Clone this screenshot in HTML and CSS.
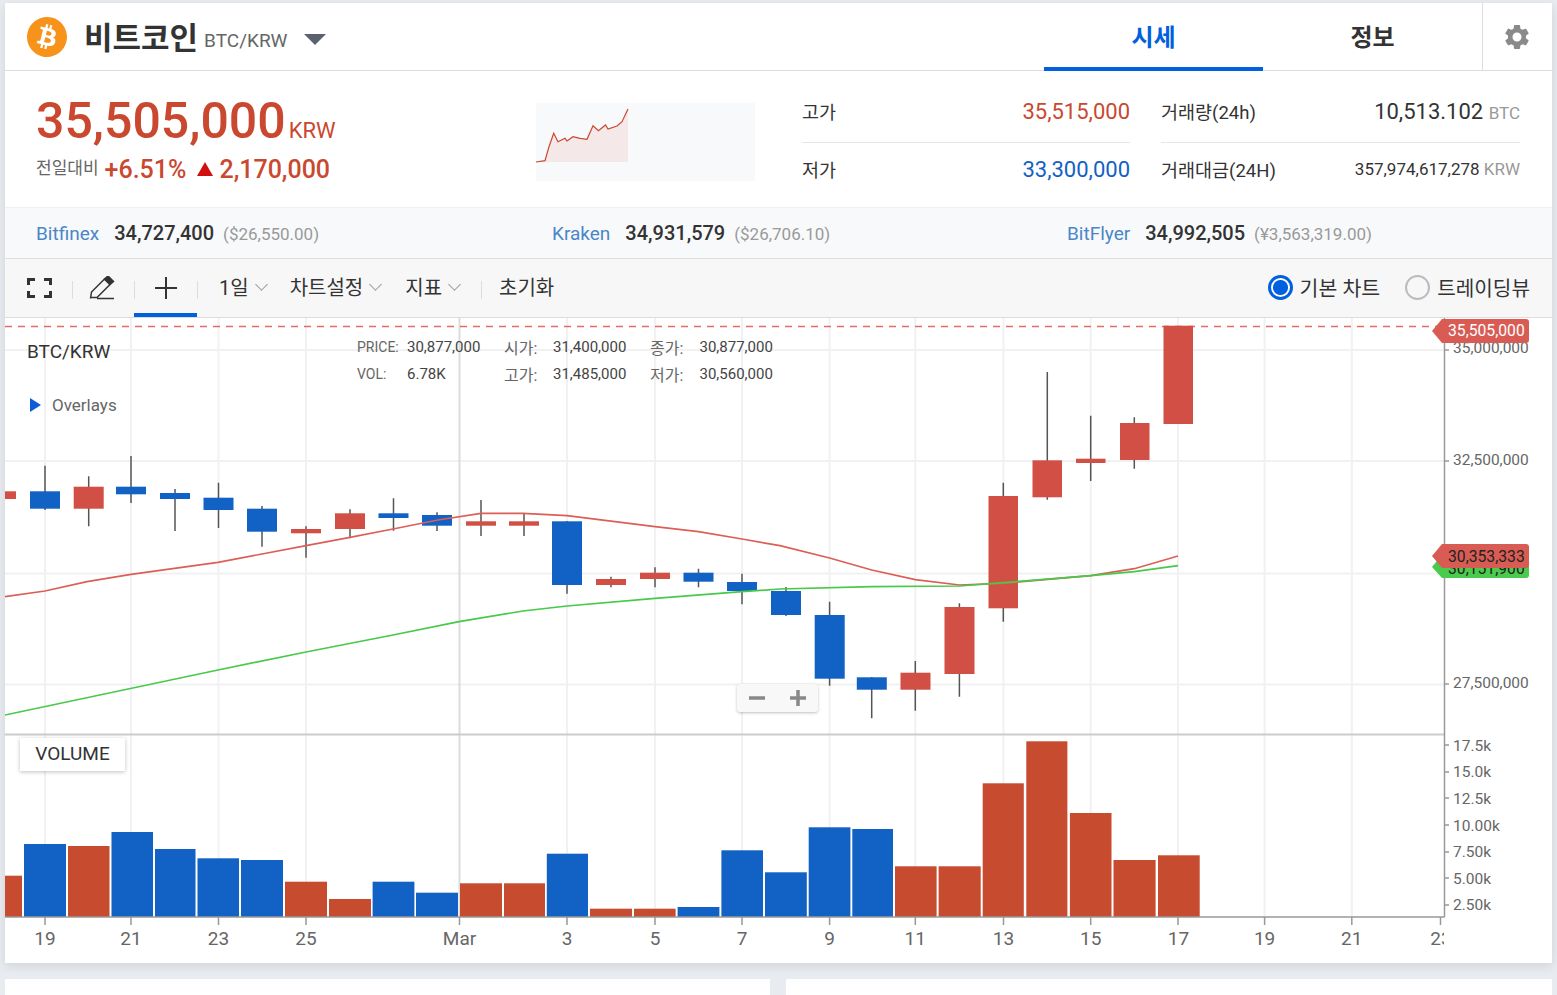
FILE: index.html
```html
<!DOCTYPE html>
<html lang="ko">
<head>
    <meta charset="UTF-8">
    <title>비트코인 BTC/KRW</title>
    <link rel="stylesheet" href="styles.css">
</head>
<body>
<div class="card">
    <header class="top-bar">
        <svg class="coin" viewBox="0 0 24 24"><path d="M23.638 14.904c-1.602 6.43-8.113 10.34-14.542 8.736C2.67 22.05-1.244 15.525.362 9.105 1.962 2.67 8.475-1.243 14.9.358c6.43 1.605 10.342 8.115 8.738 14.548v-.002zm-6.35-4.613c.24-1.59-.974-2.45-2.64-3.03l.54-2.153-1.315-.33-.525 2.107c-.345-.087-.705-.167-1.064-.25l.526-2.127-1.32-.33-.54 2.165c-.285-.067-.565-.132-.84-.2l-1.815-.45-.35 1.407s.975.225.955.236c.535.136.63.486.615.766l-1.477 5.92c-.075.166-.24.406-.614.314.015.02-.96-.24-.96-.24l-.66 1.51 1.71.426.93.242-.54 2.19 1.32.327.54-2.17c.36.1.705.19 1.05.273l-.51 2.154 1.32.33.545-2.19c2.24.427 3.93.257 4.64-1.774.57-1.637-.03-2.58-1.217-3.196.854-.193 1.5-.76 1.68-1.93h.01zm-3.01 4.22c-.404 1.64-3.157.75-4.05.53l.72-2.9c.896.23 3.757.67 3.33 2.37zm.41-4.24c-.37 1.49-2.662.735-3.405.55l.654-2.64c.744.18 3.137.524 2.75 2.084v.006z"/></svg>
        <h1 class="coin-name">비트코인</h1>
        <span class="coin-pair">BTC/KRW</span>
        <span class="coin-caret"></span>
        <nav class="tabs">
            <a class="tab tab-active">시세</a>
            <a class="tab">정보</a>
        </nav>
        <div class="settings">
            <svg viewBox="0 0 24 24"><path d="M19.14 12.94c.04-.3.06-.61.06-.94 0-.32-.02-.64-.07-.94l2.03-1.58c.18-.14.23-.41.12-.61l-1.92-3.32c-.12-.22-.37-.29-.59-.22l-2.39.96c-.5-.38-1.03-.7-1.62-.94l-.36-2.54c-.04-.24-.24-.41-.48-.41h-3.84c-.24 0-.43.17-.47.41l-.36 2.54c-.59.24-1.13.57-1.62.94l-2.39-.96c-.22-.08-.47 0-.59.22L2.74 8.87c-.12.21-.08.47.12.61l2.03 1.58c-.05.3-.09.63-.09.94s.02.64.07.94l-2.03 1.58c-.18.14-.23.41-.12.61l1.92 3.32c.12.22.37.29.59.22l2.39-.96c.5.38 1.03.7 1.62.94l.36 2.54c.05.24.24.41.48.41h3.84c.24 0 .44-.17.47-.41l.36-2.54c.59-.24 1.13-.56 1.62-.94l2.39.96c.22.08.47 0 .59-.22l1.92-3.32c.12-.22.07-.47-.12-.61l-2.01-1.58zM12 15.6c-1.98 0-3.6-1.62-3.6-3.6s1.62-3.6 3.6-3.6 3.6 1.62 3.6 3.6-1.62 3.6-3.6 3.6z"/></svg>
        </div>
    </header>

    <section class="summary">
        <div class="price-box">
            <div class="price-now">35,505,000<span class="price-unit">KRW</span></div>
            <div class="price-change">
                <span class="change-label">전일대비</span>
                <span>+6.51%</span>
                <span class="change-arrow"></span>
                <span>2,170,000</span>
            </div>
        </div>
        <svg class="spark" viewBox="536 103 219 78">
            <path class="spark-fill" d="M536 162L545 160.7 549 146.7 553.7 133.3 558 141.7 565 138.3 567 141 573 136.7 580 138.3 587 139.3 593 125.7 598.5 130.7 605.5 125 608 129 617 126 622 121.7 628 109V162Z"/>
            <path class="spark-line" d="M536 162L545 160.7 549 146.7 553.7 133.3 558 141.7 565 138.3 567 141 573 136.7 580 138.3 587 139.3 593 125.7 598.5 130.7 605.5 125 608 129 617 126 622 121.7 628 109"/>
        </svg>
        <div class="stat-col stat-col-a">
            <div class="stat-row"><span>고가</span><b class="up">35,515,000</b></div>
            <div class="stat-row"><span>저가</span><b class="down">33,300,000</b></div>
        </div>
        <div class="stat-col stat-col-b">
            <div class="stat-row"><span>거래량(24h)</span><b>10,513.102 <i>BTC</i></b></div>
            <div class="stat-row"><span>거래대금(24H)</span><b class="small-val">357,974,617,278 <i>KRW</i></b></div>
        </div>
    </section>

    <section class="exchanges">
        <div class="exchange ex-a"><a>Bitfinex</a><b>34,727,400</b><span>($26,550.00)</span></div>
        <div class="exchange ex-b"><a>Kraken</a><b>34,931,579</b><span>($26,706.10)</span></div>
        <div class="exchange ex-c"><a>BitFlyer</a><b>34,992,505</b><span>(¥3,563,319.00)</span></div>
    </section>

    <section class="toolbar">
        <button class="tool tool-full">
            <svg viewBox="0 0 25 20"><path d="M1.5 7V1.5H8M17 1.5H23.5V7M23.5 13V18.5H17M8 18.5H1.5V13"/></svg>
        </button>
        <span class="tool-sep"></span>
        <button class="tool tool-pen">
            <svg viewBox="0 0 26 24"><path d="M1.5 22.5L2.5 16 15.5 3 21 8.500 8 21.500H1.500"/><path class="pen-tip" d="M15.500 3L19 0 24.500 5.500 21 8.500Z"/><path d="M8 22.500H25"/></svg>
        </button>
        <span class="tool-sep"></span>
        <button class="tool tool-cross tool-on">
            <svg viewBox="0 0 22 22"><path d="M11 0V22M0 11H22"/></svg>
        </button>
        <span class="tool-sep"></span>
        <a class="menu menu-day">1일<i class="chev"></i></a>
        <a class="menu menu-set">차트설정<i class="chev"></i></a>
        <a class="menu menu-ind">지표<i class="chev"></i></a>
        <span class="tool-sep"></span>
        <a class="menu menu-reset">초기화</a>
        <label class="radio radio-on"><i></i>기본 차트</label>
        <label class="radio"><i></i>트레이딩뷰</label>
    </section>

    <section class="chart">
        <svg class="chart-svg" viewBox="5 318 1547 645">
            <defs><clipPath id="axisClip"><rect x="5" y="318" width="1439" height="645"/></clipPath></defs>
            <g class="grid">
                <path d="M5 350H1444M5 461H1444M5 573.500H1444M5 684.500H1444"/>
                <path d="M45 318V917M131 318V917M218.500 318V917M306 318V917M567 318V917M655 318V917M742 318V917M829.600 318V917M915.300 318V917M1003.500 318V917M1090.700 318V917M1178 318V917M1264.600 318V917M1351.800 318V917"/>
            </g>
            <path class="grid-mar" d="M459.500 318V917"/>
            <path class="pane-line" d="M5 734.500H1444"/>
            <path class="price-dash" d="M5 326.500H1440"/>

            <!-- wicks -->
            <path class="wick" d="M45 465.700V510M88.700 476.300V526.300M131 456V503M175 489V531M218.500 482.700V528M262 506V546.700M306 526.300V557.700M350 509.300V538.300M393.500 498.300V530.700M437 512.300V531M481 500V536M524 513V536M567 521V593.700M611 576.700V587.300M655 567.300V587.300M698.500 568.700V587.300M742 573.700V604.300M786 587V616M829.600 601.700V685.700M871.700 677V718.300M915.300 661V710.700M959.400 603.300V696.700M1003.300 482.700V621.700M1047.300 372V499.700M1090.700 415.700V481M1134.300 417.300V468.700"/>

            <!-- candle bodies -->
            <g class="c-red">
                <rect x="5" y="491.300" width="11" height="7.700"/>
                <rect x="73.700" y="486.700" width="30" height="22"/>
                <rect x="291" y="529" width="30" height="4.300"/>
                <rect x="335" y="513.300" width="30" height="15.700"/>
                <rect x="466" y="521.300" width="30" height="4.400"/>
                <rect x="509" y="521.300" width="30" height="4.400"/>
                <rect x="596" y="579" width="30" height="6"/>
                <rect x="640" y="572.700" width="30" height="6.300"/>
                <rect x="900.500" y="672.700" width="30" height="17"/>
                <rect x="944.500" y="607" width="30" height="67"/>
                <rect x="988.500" y="496" width="29.500" height="112.300"/>
                <rect x="1032.500" y="460.300" width="29.500" height="37"/>
                <rect x="1076" y="458.700" width="29.500" height="4.300"/>
                <rect x="1120" y="423" width="29.500" height="37"/>
                <rect x="1163.500" y="325.700" width="29.500" height="98.300"/>
            </g>
            <g class="c-blue">
                <rect x="30" y="491.300" width="30" height="17.400"/>
                <rect x="116" y="486.700" width="30" height="7.600"/>
                <rect x="160" y="493" width="30" height="6"/>
                <rect x="203.500" y="497.700" width="30" height="12.300"/>
                <rect x="247" y="508.700" width="30" height="23"/>
                <rect x="378.500" y="513.300" width="30" height="4.700"/>
                <rect x="422" y="515" width="30" height="10.700"/>
                <rect x="552" y="521.300" width="30" height="63.700"/>
                <rect x="683.500" y="572.700" width="30" height="9"/>
                <rect x="727" y="582" width="30" height="9"/>
                <rect x="771" y="591" width="30" height="24"/>
                <rect x="814.700" y="615" width="30" height="63.700"/>
                <rect x="856.800" y="677.300" width="30" height="12.400"/>
            </g>

            <!-- moving averages -->
            <path class="ma-red" d="M5 596.700L45 591 87 581.700 131 574.300 218 562.300 262 554 306 545.700 350 537.300 393 529 438 520 481 513.300 523 513.300 567 515.700 655 526.700 698.500 531.700 742 539 780 545.700 829.600 558 871.700 570 915.300 579.700 959.400 585 1003.500 583.300 1090.700 575.700 1134.300 568.700 1178 556"/>
            <path class="ma-green" d="M5 715L218 670 306 652 393 635 459 621.700 523 611 567 606 655 598.300 742 591.700 780 589 871.700 586.700 959.400 586 1003.500 582.700 1090.700 575.700 1134.300 571.700 1178 565.700"/>

            <!-- volume -->
            <g class="v-red">
                <rect x="5" y="875.700" width="17" height="41.300"/>
                <rect x="68" y="846" width="41.500" height="71"/>
                <rect x="285" y="881.700" width="42" height="35.300"/>
                <rect x="329" y="899" width="42" height="18"/>
                <rect x="460" y="883.300" width="42" height="33.700"/>
                <rect x="504" y="883.300" width="41" height="33.700"/>
                <rect x="590" y="908.700" width="42" height="8.300"/>
                <rect x="634" y="908.700" width="41.600" height="8.300"/>
                <rect x="895" y="866.300" width="41.600" height="50.700"/>
                <rect x="938.600" y="866.300" width="42.100" height="50.700"/>
                <rect x="982.700" y="783.300" width="41.100" height="133.700"/>
                <rect x="1026.300" y="741.300" width="41.100" height="175.700"/>
                <rect x="1069.900" y="813" width="41.600" height="104"/>
                <rect x="1113.500" y="860" width="42.100" height="57"/>
                <rect x="1158" y="855.300" width="41.700" height="61.700"/>
            </g>
            <g class="c-blue">
                <rect x="24" y="844" width="42" height="73"/>
                <rect x="111.500" y="832" width="41.500" height="85"/>
                <rect x="155" y="849" width="40.500" height="68"/>
                <rect x="197.500" y="858.300" width="41.500" height="58.700"/>
                <rect x="241" y="860" width="42" height="57"/>
                <rect x="372.600" y="881.700" width="41.800" height="35.300"/>
                <rect x="416" y="892.700" width="42" height="24.300"/>
                <rect x="546.800" y="853.700" width="41.200" height="63.300"/>
                <rect x="677.600" y="907" width="41.800" height="10"/>
                <rect x="721.400" y="850.300" width="41.600" height="66.700"/>
                <rect x="765" y="872.300" width="41.800" height="44.700"/>
                <rect x="808.700" y="827.300" width="41.700" height="89.700"/>
                <rect x="852.300" y="829" width="40.700" height="88"/>
            </g>

            <!-- axes -->
            <path class="axis" d="M5 917H1444.500M1444.500 318V917"/>
            <path class="tick" d="M45 917V925M131 917V925M218.500 917V925M306 917V925M459.500 917V925M567 917V925M655 917V925M742 917V925M829.600 917V925M915.300 917V925M1003.500 917V925M1090.700 917V925M1178 917V925M1264.600 917V925M1351.800 917V925M1440.500 917V925"/>
            <path class="tick" d="M1444 350H1449M1444 461H1449M1444 684H1449M1444 745H1449M1444 772H1449M1444 798H1449M1444 825H1449M1444 852H1449M1444 878H1449M1444 905H1449"/>
            <g class="y-label">
                <text x="1453" y="353">35,000,000</text>
                <text x="1453" y="465">32,500,000</text>
                <text x="1453" y="688">27,500,000</text>
                <text x="1453" y="751">17.5k</text>
                <text x="1453" y="777">15.0k</text>
                <text x="1453" y="804">12.5k</text>
                <text x="1453" y="831">10.00k</text>
                <text x="1453" y="857">7.50k</text>
                <text x="1453" y="884">5.00k</text>
                <text x="1453" y="910">2.50k</text>
            </g>
            <g class="x-label" clip-path="url(#axisClip)">
                <text x="45" y="945">19</text>
                <text x="131" y="945">21</text>
                <text x="218.500" y="945">23</text>
                <text x="306" y="945">25</text>
                <text x="459.500" y="945">Mar</text>
                <text x="567" y="945">3</text>
                <text x="655" y="945">5</text>
                <text x="742" y="945">7</text>
                <text x="829.600" y="945">9</text>
                <text x="915.300" y="945">11</text>
                <text x="1003.500" y="945">13</text>
                <text x="1090.700" y="945">15</text>
                <text x="1178.500" y="945">17</text>
                <text x="1264.600" y="945">19</text>
                <text x="1351.800" y="945">21</text>
                <text x="1441" y="945">23</text>
            </g>

            <!-- price tags -->
            <path class="tag-green" d="M1432 567L1441 556H1526Q1529 556 1529 559V575Q1529 578 1526 578H1442Z"/>
            <text class="tag-text tag-dark" x="1448" y="574">30,151,900</text>
            <path class="tag-red" d="M1432 331L1442 319H1526Q1529 319 1529 322V340Q1529 343 1526 343H1442Z"/>
            <text class="tag-text tag-light" x="1448" y="336">35,505,000</text>
            <path class="tag-red" d="M1432 556L1442 544H1526Q1529 544 1529 547V565Q1529 568 1526 568H1442Z"/>
            <text class="tag-text tag-dark" x="1448" y="562">30,353,333</text>
        </svg>

        <div class="chart-title">BTC/KRW</div>
        <div class="ohlc">
            <span class="k k-en">PRICE:</span><span>30,877,000</span><span class="k">시가:</span><span>31,400,000</span><span class="k">종가:</span><span>30,877,000</span>
            <span class="k k-en">VOL:</span><span>6.78K</span><span class="k">고가:</span><span>31,485,000</span><span class="k">저가:</span><span>30,560,000</span>
        </div>
        <div class="overlays"><i></i>Overlays</div>
        <div class="zoom-ctl">
            <svg viewBox="0 0 16 16"><path d="M0 8H16"/></svg>
            <svg viewBox="0 0 16 16"><path d="M0 8H16M8 0V16"/></svg>
        </div>
        <div class="volume-tag">VOLUME</div>
    </section>
</div>

<div class="lower">
    <div class="lower-card"></div>
    <div class="lower-card"></div>
</div>
</body>
</html>
```

FILE: styles.css
```css
* {
    box-sizing: border-box;
}

body {
    margin: 0;
    height: 995px;
    overflow: hidden;
    padding: 3px 5px 0;
    background-color: #e8ebf0;
    color: #333;
    font-family: Roboto, "Noto Sans CJK KR", sans-serif;
}

.card {
    background-color: #fff;
    box-shadow: 0 3px 10px rgba(0, 0, 0, 0.1);
}

/* top bar */
.top-bar {
    display: flex;
    align-items: center;
    height: 68px;
    border-bottom: 1px solid #ddd;
    padding-left: 22px;
}

.coin {
    width: 40px;
    height: 40px;
    fill: #f7931a;
}

.coin-name {
    margin: -2px 0 0 17px;
    font-size: 31px;
    font-weight: 700;
    color: #333;
}

.coin-pair {
    margin: 7px 0 0 6px;
    font-size: 19px;
    color: #666;
}

.coin-caret {
    margin: 6px 0 0 17px;
    border-top: 11px solid #5a6270;
    border-left: 11px solid transparent;
    border-right: 11px solid transparent;
}

.tabs {
    display: flex;
    margin-left: auto;
    align-self: stretch;
}

.tab {
    width: 219px;
    height: 68px;
    padding-top: 15px;
    text-align: center;
    font-size: 24px;
    font-weight: 700;
    color: #333;
}

.tab-active {
    color: #0060df;
    border-bottom: 4px solid #0060df;
}

.settings {
    display: flex;
    align-items: center;
    justify-content: center;
    width: 70px;
    padding-right: 2px;
    align-self: stretch;
    border-left: 1px solid #ddd;
}

.settings svg {
    width: 30px;
    height: 30px;
    fill: #8a8a8a;
}

/* price summary */
.summary {
    display: flex;
    height: 136px;
    padding: 0 32px 0 31px;
}

.price-box {
    width: 500px;
    margin-top: 20px;
}

.price-now {
    font-size: 50px;
    font-weight: 500;
    line-height: 60px;
    color: #c9482f;
}

.price-unit {
    margin-left: 3px;
    font-size: 22px;
    font-weight: 400;
}

.price-change {
    display: flex;
    align-items: center;
    margin-top: -7px;
    font-size: 25px;
    font-weight: 500;
    color: #c9482f;
    line-height: 32px;
    gap: 6px;
}

.change-label {
    margin-top: -4px;
    font-size: 17px;
    font-weight: 400;
    color: #666;
}

.change-arrow {
    margin: -2px 0 0 5px;
    border-bottom: 14px solid #d01010;
    border-left: 8px solid transparent;
    border-right: 8px solid transparent;
}

.spark {
    width: 219px;
    height: 78px;
    margin-top: 32px;
    background-color: #f8f9fb;
}

.spark-fill {
    fill: #f5e8e8;
}

.spark-line {
    fill: none;
    stroke: #c9482f;
    stroke-width: 1.200;
}

.stat-col {
    margin-top: 11px;
}

.stat-col-a {
    width: 328px;
    margin-left: 47px;
}

.stat-col-b {
    width: 359px;
    margin-left: 31px;
}

.stat-row {
    display: flex;
    justify-content: space-between;
    align-items: center;
    height: 52px;
    font-size: 18.500px;
    color: #333;
}

.stat-row:first-child {
    height: 61px;
    padding-bottom: 2px;
    border-bottom: 1px solid #e5e5ea;
}

.stat-row b {
    font-size: 22px;
    font-weight: 400;
}

.stat-row b.small-val {
    font-size: 17px;
}

.stat-row i {
    font-style: normal;
    font-size: 17px;
    color: #999;
}

.up {
    color: #c9482f;
}

.down {
    color: #1261c4;
}

/* exchange strip */
.exchanges {
    display: flex;
    align-items: center;
    height: 52px;
    border-top: 1px solid #f0f0f3;
    border-bottom: 1px solid #ddd;
    background-color: #f8f9fb;
    padding-left: 31px;
    font-size: 19px;
}

.exchange {
    display: flex;
    align-items: baseline;
}

.ex-a {
    width: 516px;
}

.ex-b {
    width: 515px;
}

.exchange a {
    color: #4a86c8;
}

.exchange b {
    margin-left: 15px;
    font-size: 20px;
    font-weight: 500;
    color: #333;
}

.exchange span {
    margin-left: 9px;
    font-size: 17px;
    color: #999;
}

/* toolbar */
.toolbar {
    display: flex;
    align-items: center;
    height: 59px;
    padding-left: 22px;
    background-color: #f7f7f7;
    border-bottom: 1px solid #ddd;
}

.tool {
    display: flex;
    align-items: center;
    justify-content: center;
    height: 58px;
    padding: 0;
    border: none;
    background: none;
}

.tool svg {
    fill: none;
    stroke: #333;
}

.tool-full {
    width: 25px;
}

.tool-full svg {
    width: 25px;
    height: 20px;
    stroke-width: 3;
}

.tool-pen {
    width: 26px;
    margin: 0 19px 0 16px;
}

.tool-pen svg {
    width: 26px;
    height: 24px;
    stroke-width: 1.5;
}

.pen-tip {
    fill: #333;
}

.tool-cross {
    width: 63px;
    margin-left: -1px;
    padding-top: 4px;
    border-bottom: 4px solid #0060df;
}

.tool-cross svg {
    width: 22px;
    height: 22px;
    stroke-width: 2;
}

.tool-sep {
    width: 1px;
    height: 18px;
    margin-top: 3px;
    background-color: #ddd;
}

.tool-full + .tool-sep {
    margin-left: 20px;
}

.menu {
    display: flex;
    align-items: center;
    padding-bottom: 4px;
    font-size: 20px;
    color: #333;
}

.menu-day {
    margin-left: 21px;
}

.menu-set {
    margin-left: 21px;
}

.menu-ind {
    margin: 0 19px 0 22px;
}

.menu-reset {
    margin-left: 17px;
}

.chev {
    width: 9px;
    height: 9px;
    margin: -4px 3px 0 8px;
    border-right: 1px solid #999;
    border-bottom: 1px solid #999;
    transform: rotate(45deg);
}

.radio {
    display: flex;
    align-items: center;
    padding-bottom: 2px;
    font-size: 20.200px;
    color: #333;
}

.radio i {
    width: 25px;
    height: 25px;
    margin-right: 7px;
    border: 2px solid #bbb;
    border-radius: 50%;
}

.radio-on {
    margin-left: auto;
    margin-right: 25px;
    font-size: 20.500px;
}

.radio-on i {
    border: 3px solid #0060df;
    background: radial-gradient(circle, #0060df 0, #0060df 7px, #fff 8px);
}

.radio:last-child {
    margin-right: 22px;
}

/* chart */
.chart {
    position: relative;
    height: 645px;
}

.chart-svg {
    display: block;
    width: 1547px;
    height: 645px;
    font-family: Roboto, sans-serif;
}

.grid path {
    fill: none;
    stroke: #f1f1f3;
    stroke-width: 2;
}

.grid-mar {
    stroke: #dcdcdc;
    stroke-width: 2;
}

.pane-line {
    stroke: #ccc;
    stroke-width: 2;
}

.price-dash {
    stroke: #e86a64;
    stroke-width: 1.500;
    stroke-dasharray: 7 6;
}

.wick {
    fill: none;
    stroke: #555;
    stroke-width: 1.500;
}

.c-red rect {
    fill: #d14f45;
}

.c-blue rect {
    fill: #1261c4;
}

.v-red rect {
    fill: #c74b2f;
}

.ma-red,
.ma-green {
    fill: none;
    stroke-width: 1.700;
}

.ma-red {
    stroke: #dc5f57;
}

.ma-green {
    stroke: #47c94a;
}

.axis,
.tick {
    fill: none;
    stroke: #999;
    stroke-width: 1.500;
}

.y-label text {
    font-size: 15.500px;
    fill: #666;
}

.x-label text {
    font-size: 19px;
    fill: #666;
    text-anchor: middle;
}

.tag-red {
    fill: #d95c54;
}

.tag-green {
    fill: #4bcb4d;
}

.tag-text {
    font-size: 15.700px;
}

.tag-light {
    fill: #fff;
}

.tag-dark {
    fill: #222;
}

.chart-title {
    position: absolute;
    left: 22px;
    top: 22px;
    font-size: 19px;
    line-height: 24px;
    color: #333;
}

.ohlc {
    position: absolute;
    left: 352px;
    top: 15px;
    display: grid;
    grid-template-columns: 50px 97px 49px 97px 49.500px auto;
    grid-auto-rows: 27px;
    align-items: center;
    font-size: 15px;
    color: #444;
}

.ohlc .k {
    font-size: 16px;
    color: #666;
}

.ohlc .k-en {
    font-size: 14px;
}

.overlays {
    position: absolute;
    left: 25px;
    top: 77px;
    display: flex;
    align-items: center;
    font-size: 17px;
    line-height: 20px;
    color: #666;
}

.overlays i {
    width: 0;
    height: 0;
    margin-right: 11px;
    border-left: 11px solid #0f5dd6;
    border-top: 7px solid transparent;
    border-bottom: 7px solid transparent;
}

.zoom-ctl {
    position: absolute;
    left: 732px;
    top: 366px;
    display: flex;
    align-items: center;
    justify-content: space-around;
    width: 81px;
    height: 28px;
    background-color: #f8f8f8;
    border-radius: 3px;
    box-shadow: 0 1px 3px rgba(0, 0, 0, 0.25);
}

.zoom-ctl svg {
    width: 16px;
    height: 16px;
    fill: none;
    stroke: #888;
    stroke-width: 3.500;
}

.volume-tag {
    position: absolute;
    left: 15px;
    top: 420px;
    width: 105px;
    height: 33px;
    background-color: #fff;
    box-shadow: 0 1px 4px rgba(0, 0, 0, 0.25);
    text-align: center;
    font-size: 19px;
    line-height: 32px;
    color: #333;
}

/* cards below the chart */
.lower {
    display: flex;
    justify-content: space-between;
    margin-top: 16px;
}

.lower-card {
    width: 765px;
    height: 40px;
    background-color: #fff;
}

.lower-card:last-child {
    width: 766px;
}
```
